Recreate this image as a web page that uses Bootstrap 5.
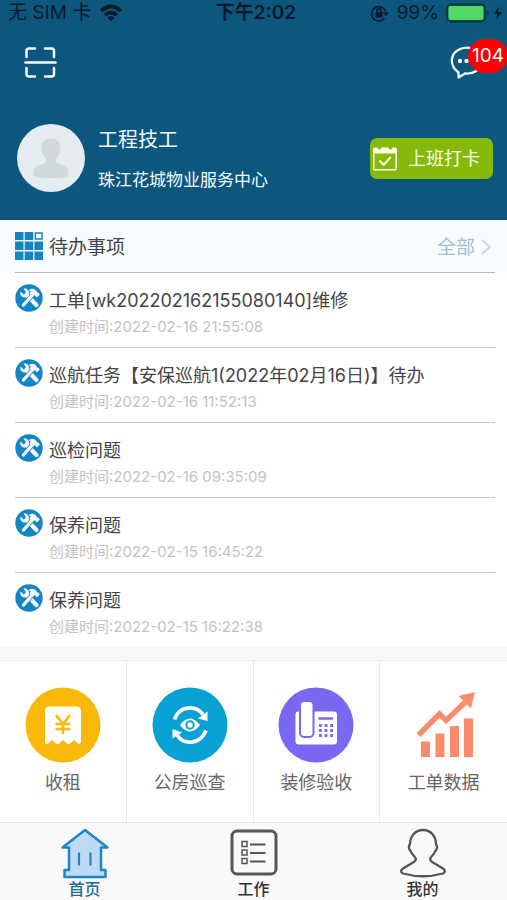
<!DOCTYPE html>
<html lang="zh-CN">
<head>
<meta charset="utf-8">
<meta name="viewport" content="width=device-width, initial-scale=1">
<title>首页</title>
<link href="https://cdn.jsdelivr.net/npm/bootstrap@5.3.0/dist/css/bootstrap.min.css" rel="stylesheet">
<style>
body{font-family:Inter,"Noto Sans CJK SC",sans-serif;background:#f6f8fa;color:#444}
svg{display:block;flex-shrink:0}
a{color:inherit;text-decoration:none}
.top-area{background:#0d577f;color:#f2fbff}
.status-bar{display:grid;grid-template-columns:1fr auto 1fr;height:24px;padding:1px 3px 0 8px;color:#061a28;font-size:19px;line-height:24px}
.status-time{font-weight:600}
.status-end{gap:7px}
.tool-row{padding:22px 24px 0;height:60px}
.icon-btn{border:0;background:none;padding:0;color:#f2fbff}
.msg-badge{position:absolute;left:18px;top:-7px;width:40px;height:34px;line-height:34px;border-radius:17px;background:#fe0000;color:#fff;font-size:19px;text-align:center}
.profile-row{padding:40px 14px 28px 17px;gap:13px}
.who{font-size:20px;line-height:28px;padding-top:2px}
.dept{font-size:17px;line-height:24px;margin-top:14px}
.punch-btn{border:0;border-radius:7px;background:#86b90a;color:#fbffe8;font-size:18px;height:41px;padding:0 13px 0 2px;gap:10px}
.todo-head{background:#f7fcff;padding:0 12px 0 15px}
.todo-title{font-size:19px;margin:0 0 0 6px;font-weight:400;line-height:28px;padding-top:4px}
.todo-all{font-size:19px;color:#a9bccd;gap:4px}
.todo-all span{padding-top:4px}
.todo-all svg{margin-top:2px}
.todo-head-inner{border-bottom:1px solid #b9bdc0;height:53px}
.todo-list{padding:0 12px 0 15px;background:#fff}
.todo-row{padding:16px 0 10px;border-bottom:1px solid #c6c6c6;gap:6px}
.todo-list li:last-child .todo-row{border-bottom:0}
.todo-row svg{margin-top:-5px}
.row-name{font-size:18px;line-height:24px}
.row-time{font-size:15px;line-height:20px;margin-top:4px;color:#c3c3c3}
.tiles{margin-top:13px;background:#fff;border-top:1px solid #e9ebed}
.tile{height:161px;padding-top:26px;border-right:1px solid #e9ebed;font-size:18px;line-height:24px;color:#666;gap:8px}
.tiles .col:last-child .tile{border-right:0}
.tab-bar{background:#f9f9f9;border-top:1px solid #e6e6e6}
.tab-link{font-size:16px;font-weight:500;line-height:20px;padding:5px 0 1px;color:#333}
.tab-link.active{color:#1d6c9b}
</style>
</head>
<body class="d-flex flex-column min-vh-100">
<svg width="0" height="0" class="position-absolute" aria-hidden="true">
<symbol id="tools" viewBox="0 0 28 28"><circle cx="14" cy="14" r="13.700" fill="#1384c4"/><path d="M8.800 4.800C12 4.300 14.300 6.600 13.600 10L22.800 19.700c1.500 2-.8 4.200-2.700 2.700L11 13c-3.300 1-6.200-1.500-5.300-5l2.600 2.400 2.200-.4.500-2.300z" fill="#f4fbff" stroke="#f4fbff" stroke-width=".6" stroke-linejoin="round"/><path d="M17.300 11L8.500 21" fill="none" stroke="#1384c4" stroke-width="4.800"/><path d="M17.700 10.500L8.500 21" fill="none" stroke="#f4fbff" stroke-width="3.400" stroke-linecap="round"/><path d="M13.800 6.200c3-2.200 5.600-1.800 7.400.6l1.300 1.900 1-.3 1.200 2.300-2.900 2.700-1.900-2.300-2 1.700-3.400-3.200 1.300-2.200z" fill="#f4fbff"/></symbol>
</svg>

<header class="top-area">
<div class="status-bar">
<div class="d-flex align-items-center gap-2"><span>无 SIM 卡</span>
<svg width="24" height="18" viewBox="0 0 24 18"><g fill="none" stroke="#061a28" stroke-width="3.600"><path d="M2 7Q12-2 22 7"/><path d="M6 11.200Q12 6 18 11.200"/></g><path d="M8.500 13.700Q12 11 15.500 13.700L12 17.200z" fill="#061a28"/></svg></div>
<div class="status-time">下午2:02</div>
<div class="status-end d-flex align-items-center justify-content-end">
<svg width="20" height="18" viewBox="0 0 20 18"><path d="M14.500 14.300A7.200 7.200 0 1 1 15.700 7.500" fill="none" stroke="#061a28" stroke-width="1.700"/><path d="M12.800 8.200H19L16 12z" fill="#061a28"/><rect x="5.500" y="8" width="7" height="5.500" rx=".8" fill="#061a28"/><path d="M7 8V6.700a2 2 0 0 1 4 0V8" fill="none" stroke="#061a28" stroke-width="1.400"/></svg>
<span>99%</span>
<svg width="58" height="20" viewBox="0 0 58 20"><rect x="1" y="1.500" width="38" height="17" rx="4" fill="none" stroke="#08392f" stroke-width="2"/><rect x="2.500" y="3" width="35" height="14" rx="2" fill="#52d865"/><path d="M41 7.500q4 2.500 0 5z" fill="#08392f"/><path d="M53.500 3L48 10.700h3.500L50 17l6-8h-4z" fill="#061a28"/></svg>
</div>
</div>
<div class="tool-row d-flex justify-content-between align-items-start">
<button type="button" class="icon-btn" aria-label="扫一扫"><svg width="33" height="33" viewBox="0 0 33 33" fill="none" stroke="currentColor" stroke-width="2.500" stroke-linecap="round"><path d="M2.500 11V5q0-2.500 2.500-2.500h6M21 2.500h6.500Q30 2.500 30 5v6M2.500 22v6q0 2.500 2.500 2.500h6M21 30.500h6.500Q30 30.500 30 28v-6M1.500 16.500h30"/></svg></button>
<button type="button" class="icon-btn position-relative" aria-label="消息 104"><svg width="33" height="34" viewBox="0 0 33 34"><path d="M8.500 26.500C-1.500 19 .5 7 10 3c10-4 22 1 21.500 12C31 24 23 28.500 15 27.500L8.500 31.500z" fill="none" stroke="currentColor" stroke-width="2.300" stroke-linejoin="round"/><g fill="currentColor"><circle cx="10" cy="15" r="2.200"/><circle cx="16.500" cy="15" r="2.200"/><circle cx="23" cy="15" r="2.200"/></g></svg><span class="msg-badge">104</span></button>
</div>
<div class="profile-row d-flex align-items-center">
<svg width="68" height="68" viewBox="0 0 68 68"><circle cx="34" cy="34" r="34" fill="#e5ebee"/><path d="M34 14.500c7 0 10 5 9.200 11-.5 4-2.500 7-4.200 9.500-1 3 .5 4 4 5.300C49 42 52 44 51.500 50c0 2-1.500 4-17.500 4s-17.500-2-17.500-4c0-6 3-8 8.500-9.700 3.500-1.300 5-2.300 4-5.300-1.700-2.500-3.700-5.500-4.200-9.500-.8-6 2.200-11 9.200-11z" fill="#cfd9dc"/></svg>
<div class="flex-grow-1"><div class="who">工程技工</div><div class="dept">珠江花城物业服务中心</div></div>
<button type="button" class="punch-btn d-flex align-items-center"><svg width="26" height="28" viewBox="0 0 26 28"><path d="M3 3.500h2.500a2 2 0 0 0 4 0h7a2 2 0 0 0 4 0H23q2 0 2 2v19q0 2-2 2H3q-2 0-2-2v-19q0-2 2-2z" fill="#fbffe8"/><path d="M2.500 9.500h21V25h-21z" fill="#86b90a"/><path d="M7.500 16.500l4.200 4.500 7-8" fill="none" stroke="#fbffe8" stroke-width="2"/></svg><span>上班打卡</span></button>
</div>
</header>

<main>
<section>
<div class="todo-head"><div class="todo-head-inner d-flex align-items-center">
<svg width="28" height="28" viewBox="0 0 28 28"><path d="M0 0h8.500v8H0zM9.700 0h8.500v8H9.700zM0 9.500h8.500v8.500H0zM9.700 9.500h8.500v8.500H9.700zM19.400 9.500H28v8.500h-8.600zM0 19.500h8.500V28H0zM9.700 19.500h8.500V28H9.700zM19.400 19.500H28V28h-8.600z" fill="#1384c4"/><path d="M20.400 1H27v6h-6.600z" fill="#fff" stroke="#1384c4" stroke-width="1.500"/></svg>
<h1 class="todo-title flex-grow-1">待办事项</h1>
<a href="#all" class="todo-all d-flex align-items-center"><span>全部</span><svg width="16" height="18" viewBox="0 0 16 18"><path d="M3 2l8 7-8 7" fill="none" stroke="#c8d2da" stroke-width="1.800"/></svg></a>
</div></div>
<ul class="todo-list list-unstyled mb-0">
<li><a href="#t1" class="todo-row d-flex"><svg width="28" height="28"><use href="#tools"/></svg><div><div class="row-name">工单[wk202202162155080140]维修</div><div class="row-time">创建时间:2022-02-16 21:55:08</div></div></a></li>
<li><a href="#t2" class="todo-row d-flex"><svg width="28" height="28"><use href="#tools"/></svg><div><div class="row-name">巡航任务【安保巡航1(2022年02月16日)】待办</div><div class="row-time">创建时间:2022-02-16 11:52:13</div></div></a></li>
<li><a href="#t3" class="todo-row d-flex"><svg width="28" height="28"><use href="#tools"/></svg><div><div class="row-name">巡检问题</div><div class="row-time">创建时间:2022-02-16 09:35:09</div></div></a></li>
<li><a href="#t4" class="todo-row d-flex"><svg width="28" height="28"><use href="#tools"/></svg><div><div class="row-name">保养问题</div><div class="row-time">创建时间:2022-02-15 16:45:22</div></div></a></li>
<li><a href="#t5" class="todo-row d-flex"><svg width="28" height="28"><use href="#tools"/></svg><div><div class="row-name">保养问题</div><div class="row-time">创建时间:2022-02-15 16:22:38</div></div></a></li>
</ul>
</section>
<nav class="tiles row g-0" aria-label="功能">
<div class="col"><a href="#rent" class="tile d-flex flex-column align-items-center">
<svg width="76" height="76" viewBox="0 0 76 76"><circle cx="38" cy="38" r="37.500" fill="#fab80a"/><path d="M20 56V24q0-4.500 4.500-4.500h27Q56 19.500 56 24v32l-2.500 1-4.500-4-4.500 4-2 0-4.500-4-4.500 4-2 0-4.500-4-4.500 4z" fill="#fff"/><path d="M31 28l7 9 7-9M38 37v10M30.500 37h15M30.500 42h15" fill="none" stroke="#fab80a" stroke-width="2.600"/></svg><span>收租</span></a></div>
<div class="col"><a href="#patrol" class="tile d-flex flex-column align-items-center">
<svg width="76" height="76" viewBox="0 0 76 76"><circle cx="38" cy="38" r="37.500" fill="#08a1d3"/><g fill="none" stroke="#fff" stroke-width="3.700"><path d="M22.500 32.500C27 19 43 17.500 51 27.500M54 43.500C48 58 32 58.500 25 48"/></g><path d="M55.500 24.500V34L46 31.500zM20.500 51.500V42l9.500 3.500z" fill="#fff"/><path d="M28 38q10-13 20 0-10 13-20 0z" fill="#fff"/><circle cx="38" cy="38" r="3.700" fill="#fff" stroke="#08a1d3" stroke-width="2"/></svg><span>公房巡查</span></a></div>
<div class="col"><a href="#accept" class="tile d-flex flex-column align-items-center">
<svg width="76" height="76" viewBox="0 0 76 76"><circle cx="38" cy="38" r="37.500" fill="#7868f2"/><rect x="17.500" y="24.500" width="41.500" height="33" rx="3" fill="#fff"/><rect x="22" y="14" width="13.500" height="36" rx="4" fill="#fff" stroke="#7868f2" stroke-width="2"/><path d="M40.500 31.500H55" stroke="#7868f2" stroke-width="2.500"/><path d="M41 38.500h14M41 43.500h14M41 48.500h14" stroke="#7868f2" stroke-width="2.800" stroke-dasharray="2.800 2.800"/></svg><span>装修验收</span></a></div>
<div class="col"><a href="#stats" class="tile d-flex flex-column align-items-center">
<svg width="76" height="76" viewBox="-2 0 76 76" fill="#fa8b6c"><path d="M13 54.500h9V70h-9zM27.500 46.500h9V70h-9zM42 39h9v31h-9zM56 31.500h9V70h-9z"/><path d="M10.500 48L31.500 27l6.500 6.500L60 12.500" fill="none" stroke="#fa8b6c" stroke-width="5.500"/><path d="M67 5l-4 16.500L50.500 9z"/></svg><span>工单数据</span></a></div>
</nav>
</main>

<nav class="tab-bar row g-0 mt-auto" aria-label="主导航">
<div class="col"><a href="#home" class="tab-link active d-flex flex-column align-items-center" aria-current="page">
<svg width="50" height="51" viewBox="0 0 50 51"><path d="M25 2L47.500 19.500H41V42h4.500v7h-41v-7H9V19.500H2.500z" fill="#bedaf5" stroke="#1f87bd" stroke-width="2.500" stroke-linejoin="round"/><path d="M19 24.500v13M30.500 24.500v13" stroke="#1f87bd" stroke-width="2.200"/></svg><span>首页</span></a></div>
<div class="col"><a href="#work" class="tab-link d-flex flex-column align-items-center">
<svg width="50" height="51" viewBox="0 0 50 51" fill="none" stroke="#555"><rect x="3" y="3" width="44" height="43" rx="5" stroke-width="3"/><path d="M13 13.500h5v5h-5zM13 22h5v5h-5zM13 30.500h5v5h-5z" stroke-width="1.500"/><path d="M21 16.500h15.500M21 25h15.500M21 33.500h15.500" stroke-width="2.200"/></svg><span>工作</span></a></div>
<div class="col"><a href="#me" class="tab-link d-flex flex-column align-items-center">
<svg width="50" height="51" viewBox="0 1 50 51"><path d="M25 3C17 3 12 9.500 12 17c-2 3-.5 6 1 7.500 1 3 3 4 4.500 6.500.8 2-.5 3.500-2.500 4.500L5 41.500c-3 2-2 4.200 0 5Q25 52 45 46.500c2-.8 3-3 0-5l-10-6c-2-1-3.300-2.500-2.500-4.500 1.500-2.500 3.500-3.500 4.500-6.500 1.500-1.500 3-4.500 1-7.500C38 9.500 33 3 25 3z" fill="none" stroke="#555" stroke-width="2.300" stroke-linejoin="round"/></svg><span>我的</span></a></div>
</nav>
<script src="https://cdn.jsdelivr.net/npm/bootstrap@5.3.0/dist/js/bootstrap.bundle.min.js"></script>
</body>
</html>
